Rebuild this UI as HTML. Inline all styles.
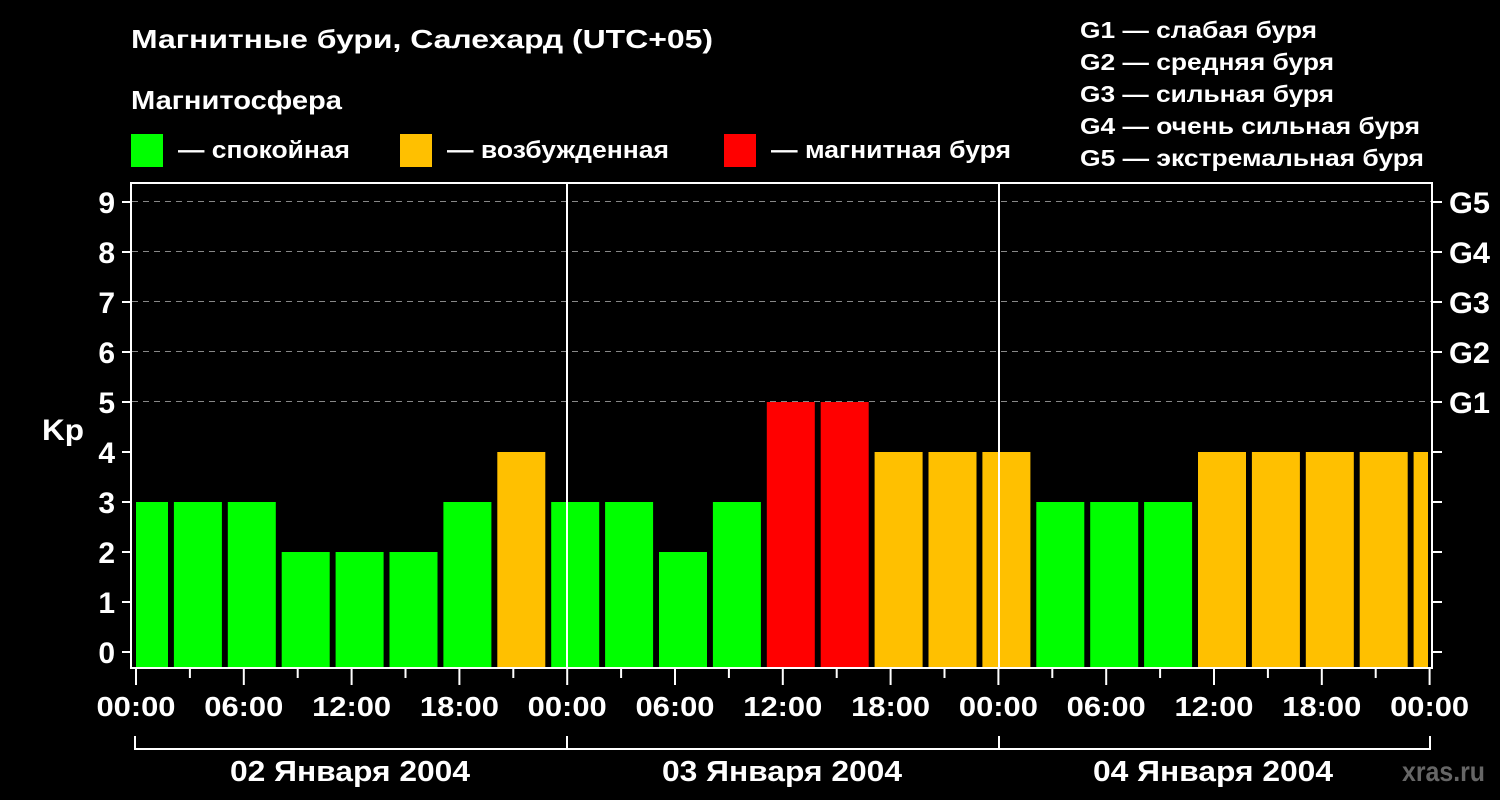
<!DOCTYPE html><html><head><meta charset="utf-8"><style>body{margin:0;background:#000}svg{display:block}text{font-family:"Liberation Sans",sans-serif;font-weight:bold;fill:#fff}</style></head><body>
<svg width="1500" height="800" viewBox="0 0 1500 800">
<rect width="1500" height="800" fill="#000"/>
<g lengthAdjust="spacingAndGlyphs">
<text x="131" y="48" font-size="26" textLength="582" lengthAdjust="spacingAndGlyphs">Магнитные бури, Салехард (UTC+05)</text>
<text x="131" y="109" font-size="26" textLength="211" lengthAdjust="spacingAndGlyphs">Магнитосфера</text>
<rect x="131" y="134" width="32" height="33" fill="#00ff00"/><text x="178" y="158" font-size="24" textLength="172" lengthAdjust="spacingAndGlyphs">— спокойная</text>
<rect x="400" y="134" width="32" height="33" fill="#ffc000"/><text x="447" y="158" font-size="24" textLength="222" lengthAdjust="spacingAndGlyphs">— возбужденная</text>
<rect x="724" y="134" width="32" height="33" fill="#ff0000"/><text x="771" y="158" font-size="24" textLength="240" lengthAdjust="spacingAndGlyphs">— магнитная буря</text>
<g font-size="23"><text x="1080" y="38" textLength="237" lengthAdjust="spacingAndGlyphs">G1 — слабая буря</text><text x="1080" y="70" textLength="254" lengthAdjust="spacingAndGlyphs">G2 — средняя буря</text><text x="1080" y="102" textLength="254" lengthAdjust="spacingAndGlyphs">G3 — сильная буря</text><text x="1080" y="134" textLength="340" lengthAdjust="spacingAndGlyphs">G4 — очень сильная буря</text><text x="1080" y="166" textLength="344" lengthAdjust="spacingAndGlyphs">G5 — экстремальная буря</text></g>
</g>
<g stroke="#888" stroke-width="1" stroke-dasharray="6,5"><line x1="132" y1="201.5" x2="1432" y2="201.5"/><line x1="132" y1="251.5" x2="1432" y2="251.5"/><line x1="132" y1="301.5" x2="1432" y2="301.5"/><line x1="132" y1="351.5" x2="1432" y2="351.5"/><line x1="132" y1="401.5" x2="1432" y2="401.5"/></g>
<g id="bars"></g>
<g stroke="#fff" stroke-width="2" fill="none">
<rect x="131" y="183" width="1301" height="485"/>
<line x1="567" y1="183" x2="567" y2="668"/><line x1="999" y1="183" x2="999" y2="668"/>
<path d="M135 736V749H1430V736M567 736V749M999 736V749"/>
</g>
<g id="ticks" stroke="#fff" stroke-width="2"></g>
<g font-size="30" text-anchor="end"><text x="115" y="663">0</text><text x="115" y="613">1</text><text x="115" y="563">2</text><text x="115" y="513">3</text><text x="115" y="463">4</text><text x="115" y="413">5</text><text x="115" y="363">6</text><text x="115" y="313">7</text><text x="115" y="263">8</text><text x="115" y="213">9</text></g>
<text x="42" y="440" font-size="30" textLength="42" lengthAdjust="spacingAndGlyphs">Kp</text>
<g font-size="30"><text x="1449" y="413" textLength="41" lengthAdjust="spacingAndGlyphs">G1</text><text x="1449" y="363" textLength="41" lengthAdjust="spacingAndGlyphs">G2</text><text x="1449" y="313" textLength="41" lengthAdjust="spacingAndGlyphs">G3</text><text x="1449" y="263" textLength="41" lengthAdjust="spacingAndGlyphs">G4</text><text x="1449" y="213" textLength="41" lengthAdjust="spacingAndGlyphs">G5</text></g>
<g id="times" font-size="28"></g>
<g font-size="29"><text x="230" y="781" textLength="240" lengthAdjust="spacingAndGlyphs">02 Января 2004</text><text x="662" y="781" textLength="240" lengthAdjust="spacingAndGlyphs">03 Января 2004</text><text x="1093" y="781" textLength="240" lengthAdjust="spacingAndGlyphs">04 Января 2004</text></g>
<text x="1402" y="781" font-size="28" textLength="83" lengthAdjust="spacingAndGlyphs" style="fill:#666">xras.ru</text>
</svg>
<script>
var v=[3,3,3,2,2,2,3,4,3,3,2,3,5,5,4,4,4,3,3,3,4,4,4,4,4],h="",t="",s="";
v.forEach(function(k,i){var x=136+53.9*i-16,w=48;if(x<136){w-=136-x;x=136}if(x+w>1428)w=1428-x;var c=k>=5?"#ff0000":k==4?"#ffc000":"#00ff00";var y=652-50*k;h+='<rect x="'+x+'" y="'+y+'" width="'+w+'" height="'+(667-y)+'" fill="'+c+'"/>'});
document.getElementById("bars").innerHTML=h;
for(var k=0;k<=9;k++){var y=652-50*k;t+='<line x1="122" y1="'+y+'" x2="131" y2="'+y+'"/><line x1="1432" y1="'+y+'" x2="1442" y2="'+y+'"/>'}
for(var i=0;i<=24;i++){var x=136+53.9*i;t+='<line x1="'+x+'" y1="668" x2="'+x+'" y2="'+(i%2?678:685)+'"/>'}
document.getElementById("ticks").innerHTML=t;
var L=["00:00","06:00","12:00","18:00"];
for(var i=0;i<=12;i++){var x=136+107.8*i;s+='<text x="'+(x-39.5)+'" y="716" textLength="79" lengthAdjust="spacingAndGlyphs">'+L[i%4]+'</text>'}
document.getElementById("times").innerHTML=s;
</script>
</body></html>
